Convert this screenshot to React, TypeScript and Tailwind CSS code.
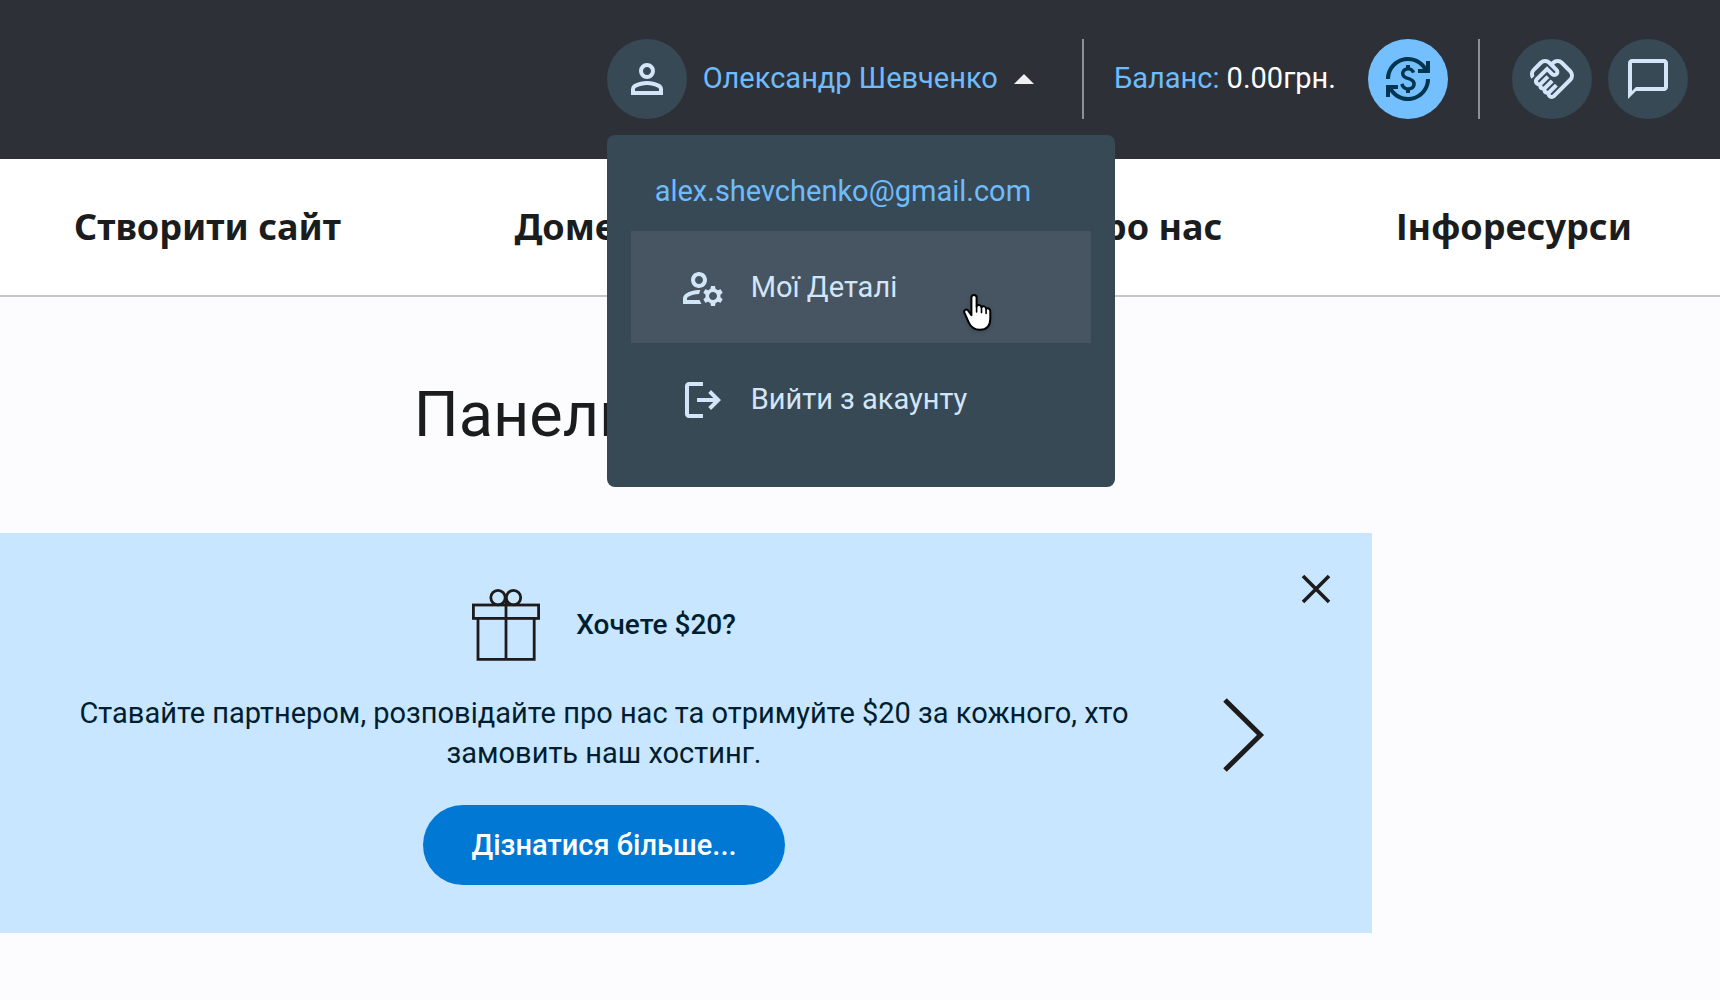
import React from "react";
import {
  MdChatBubbleOutline,
  MdCurrencyExchange,
  MdOutlineHandshake,
  MdOutlineManageAccounts,
} from "react-icons/md";

const navItems = ["Створити сайт", "Домени", "VPS", "Про нас", "Інфоресурси"];

const PersonIcon: React.FC = () => (
  <svg className="size-12 shrink-0" viewBox="0 0 24 24" fill="currentColor" aria-hidden="true">
    <path d="M12 12q-1.65 0-2.825-1.175T8 8t1.175-2.825T12 4t2.825 1.175T16 8t-1.175 2.825T12 12m-8 8v-2.8q0-.85.438-1.562T5.6 14.55q1.55-.775 3.15-1.162T12 13t3.25.388t3.15 1.162q.725.375 1.163 1.088T20 17.2V20zm2-2h12v-.8q0-.275-.137-.5t-.363-.35q-1.35-.675-2.725-1.012T12 15t-2.775.338T6.5 16.35q-.225.125-.363.35T6 17.2zm6-8q.825 0 1.413-.587T14 8t-.587-1.412T12 6t-1.412.588T10 8t.588 1.413T12 10" />
  </svg>
);

const LogoutIcon: React.FC = () => (
  <svg className="size-12 shrink-0" viewBox="0 0 24 24" fill="currentColor" aria-hidden="true">
    <path d="M5 21q-.825 0-1.412-.587T3 19V5q0-.825.588-1.412T5 3h7v2H5v14h7v2zm11-4l-1.375-1.45l2.55-2.55H9v-2h8.175l-2.55-2.55L16 7l5 5z" />
  </svg>
);

const GiftIcon: React.FC = () => (
  <svg className="h-[72px] w-[68px]" viewBox="0 0 68 72" fill="none" stroke="#1d1b1b" strokeWidth="2.8" aria-hidden="true">
    <circle cx="26" cy="8.6" r="7.2" />
    <circle cx="41.5" cy="8.6" r="7.2" />
    <rect x="1.4" y="16" width="65.2" height="13.4" />
    <path d="M6 29V70.4H62.2V29M34 10V70" />
  </svg>
);

const HandPointer: React.FC = () => (
  <svg
    className="pointer-events-none absolute top-[62px] left-[331px] h-[40px] w-[30px] drop-shadow-sm"
    viewBox="0 0 30 40"
    fill="#fff"
    stroke="#000"
    strokeWidth="2"
    strokeLinejoin="round"
    strokeLinecap="round"
    aria-hidden="true"
  >
    <path d="M9.4 22.2V4.6C9.4 1 14.6 1 14.6 4.6V13.6C15.2 11.4 19.3 11.6 19.5 14.4C20.4 12.6 24 13 24.1 15.8C25.2 14.6 28.3 15.4 28.3 18.2V25.5C28.3 31.5 25.6 36.8 18 36.8C11.5 36.8 8.6 33.6 6.8 29.6C5.3 26.2 3.6 22.4 2.4 19.6C1.4 17 4.6 15.4 6.2 17.6Z" />
    <path d="M14.6 13.6V19M19.5 14.6V19.6M24.1 16V20.4" fill="none" strokeWidth="1.6" />
  </svg>
);

const UserMenu: React.FC = () => (
  <div className="relative">
    <button type="button" className="flex items-center" aria-expanded="true">
      <span className="flex size-20 items-center justify-center rounded-full bg-[#374955] text-[#d3e5f9]">
        <PersonIcon />
      </span>
      <span className="ml-4 text-[#6fbcfd]">Олександр Шевченко</span>
      <svg className="ml-4 h-[10px] w-5" viewBox="0 0 20 10" fill="#f0f0f3" aria-hidden="true">
        <path d="M0 10L10 0l10 10z" />
      </svg>
    </button>

    <div className="absolute top-24 left-0 z-10 w-[508px] rounded-lg bg-[#374955] px-6 pb-8">
      <p className="px-6 pt-8 pb-4 leading-[48px] text-[#6fbcfd]">alex.shevchenko@gmail.com</p>
      <a href="#details" className="relative flex h-28 items-center gap-6 bg-[#465561] px-12 pt-0.5 text-[#d3e5f9]">
        <MdOutlineManageAccounts className="size-12 shrink-0" />
        Мої Деталі
        <HandPointer />
      </a>
      <a href="#logout" className="flex h-28 items-center gap-6 px-12 pt-0.5 text-[#d3e5f9]">
        <LogoutIcon />
        Вийти з акаунту
      </a>
    </div>
  </div>
);

const Header: React.FC = () => (
  <header className="flex items-center justify-end bg-[#2d3137] px-8 pt-[39px] pb-10">
    <UserMenu />
    <div className="ml-12 h-20 w-[2px] bg-[#8e9194]" />
    <p className="mr-8 ml-[30px] text-white">
      <span className="text-[#6fbcfd]">Баланс:</span> 0.00грн.
    </p>
    <button
      type="button"
      aria-label="Поповнити баланс"
      className="flex size-20 items-center justify-center rounded-full bg-[#74c0ff] text-[#00344f]"
    >
      <MdCurrencyExchange className="size-12" />
    </button>
    <div className="mr-8 ml-[30px] h-20 w-[2px] bg-[#8e9194]" />
    <div className="flex gap-4">
      <button
        type="button"
        aria-label="Партнерство"
        className="flex size-20 items-center justify-center rounded-full bg-[#374955] text-[#d3e5f9]"
      >
        <MdOutlineHandshake className="size-12" />
      </button>
      <button
        type="button"
        aria-label="Чат"
        className="flex size-20 items-center justify-center rounded-full bg-[#374955] text-[#d3e5f9]"
      >
        <MdChatBubbleOutline className="size-12" />
      </button>
    </div>
  </header>
);

const Banner: React.FC = () => (
  <section className="flex bg-[#c8e6ff] pt-14 pb-12 text-[#001e2f]">
    <div className="flex flex-1 flex-col items-center gap-8 pl-[72px]">
      <div className="flex items-center gap-9">
        <GiftIcon />
        <h2 className="text-[28px] font-medium">Хочете $20?</h2>
      </div>
      <p className="max-w-[1060px] text-center leading-10">
        Ставайте партнером, розповідайте про нас та отримуйте $20 за кожного, хто замовить наш хостинг.
      </p>
      <a href="#partner" className="rounded-full bg-[#0078d4] px-12 font-medium leading-[80px] text-white">
        Дізнатися більше...
      </a>
    </div>
    <div className="flex w-[236px] shrink-0 flex-col pl-[82px]">
      <button type="button" aria-label="Закрити" className="-mt-5 mr-9 self-end p-1">
        <svg className="size-8" viewBox="0 0 32 32" stroke="#1d1b1b" strokeWidth="3.6" aria-hidden="true">
          <path d="M3 3L29 29M29 3L3 29" />
        </svg>
      </button>
      <button type="button" aria-label="Далі" className="mt-[84px] self-start p-1">
        <svg className="h-[76px] w-[44px]" viewBox="0 0 44 76" fill="none" stroke="#1d1b1b" strokeWidth="5" aria-hidden="true">
          <path d="M3 3L38.5 38L3 73" />
        </svg>
      </button>
    </div>
  </section>
);

const App: React.FC = () => {
  return (
    <div className="min-h-screen bg-[#fcfcff] font-['Roboto',sans-serif] text-[29px] text-[#1a1c1e]">
      <Header />
      <nav className="flex justify-between border-b-2 border-[#c6c6c9] bg-white pr-[88px] pl-[74px] font-['Noto_Sans',sans-serif] text-[36px] leading-[136px] font-bold">
        {navItems.map((item) => (
          <a key={item} href="#nav">
            {item}
          </a>
        ))}
      </nav>
      <main className="pt-[78px] pr-[348px]">
        <h1 className="mb-[78px] text-center text-[63px] leading-[80px]">Панель керування</h1>
        <Banner />
      </main>
    </div>
  );
};

export default App;
